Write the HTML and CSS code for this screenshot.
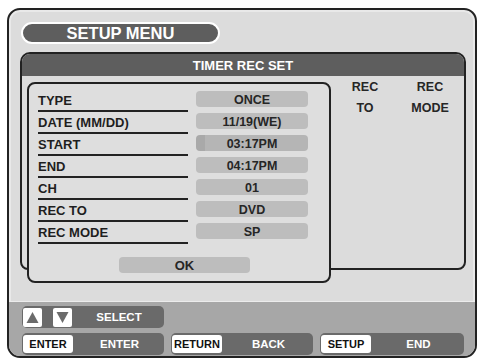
FILE: index.html
```html
<!DOCTYPE html>
<html>
<head>
<meta charset="utf-8">
<link rel="stylesheet" href="styles.css">
</head>
<body>
<div class="frame">
  <div class="title">SETUP MENU</div>
  <div class="panel">
    <div class="panel-head">TIMER REC SET</div>
    <div class="panel-body">
      <div class="dialog">
        <div class="row"><span class="label">TYPE</span><span class="val">ONCE</span></div>
        <div class="row"><span class="label">DATE (MM/DD)</span><span class="val">11/19(WE)</span></div>
        <div class="row"><span class="label">START</span><span class="val val-sel">03:17PM</span></div>
        <div class="row"><span class="label">END</span><span class="val">04:17PM</span></div>
        <div class="row"><span class="label">CH</span><span class="val">01</span></div>
        <div class="row"><span class="label">REC TO</span><span class="val">DVD</span></div>
        <div class="row"><span class="label">REC MODE</span><span class="val">SP</span></div>
        <div class="ok">OK</div>
      </div>
      <div class="cols">
        <div class="col">REC<br>TO</div>
        <div class="col">REC<br>MODE</div>
      </div>
    </div>
  </div>
  <div class="band">
    <div class="brow">
      <div class="grp">
        <span class="arrows">
          <span class="sq"><svg width="19" height="19" viewBox="0 0 19 19"><polygon points="3.5,15 15.5,15 9.5,4" fill="#6b6b6b"/></svg></span>
          <span class="sq"><svg width="19" height="19" viewBox="0 0 19 19"><polygon points="3.5,4 15.5,4 9.5,15" fill="#6b6b6b"/></svg></span>
        </span>
        <span class="txt">SELECT</span>
      </div>
    </div>
    <div class="brow">
      <div class="grp"><span class="key">ENTER</span><span class="txt">ENTER</span></div>
      <div class="grp"><span class="key">RETURN</span><span class="txt">BACK</span></div>
      <div class="grp grp-wide"><span class="key">SETUP</span><span class="txt">END</span></div>
    </div>
  </div>
</div>
</body>
</html>
```

FILE: styles.css
```css
* { box-sizing: border-box; }
html, body { margin: 0; padding: 0; background: #ffffff; }
body {
  font-family: "Liberation Sans", Arial, sans-serif;
  font-weight: bold;
  color: #222;
}
.frame {
  width: 470px;
  height: 350px;
  margin: 8px 0 0 7px;
  border: 2px solid #222;
  border-radius: 13px;
  background: #dcdcdc;
  box-shadow: inset 0 0 0 2px #e9e9e9;
  overflow: hidden;
  display: flex;
  flex-direction: column;
}
.title {
  width: 199px;
  height: 22px;
  margin: 12px 0 0 12px;
  border: 2px solid #fff;
  border-radius: 11px;
  background: #5e5e5e;
  color: #fff;
  font-size: 16.5px;
  line-height: 18px;
  text-align: center;
}
.panel {
  width: 446px;
  height: 218px;
  margin: 8px 0 0 11px;
  border: 2px solid #222;
  border-radius: 10px 10px 8px 8px;
  background: #dcdcdc;
  flex-shrink: 0;
}
.panel-head {
  height: 22px;
  background: #5e5e5e;
  border-radius: 8px 8px 0 0;
  color: #fff;
  font-size: 13px;
  line-height: 23px;
  text-align: center;
}
.panel-body {
  display: flex;
  height: 192px;
}
.dialog {
  flex-shrink: 0;
  width: 304px;
  height: 201px;
  margin: 6px 0 0 5px;
  padding: 6px 0 0 9px;
  border: 2px solid #222;
  border-radius: 8px;
  background: #dedede;
}
.row {
  display: flex;
  gap: 8px;
  height: 22px;
}
.label {
  width: 150px;
  height: 22px;
  border-bottom: 2px solid #222;
  font-size: 13px;
  line-height: 21px;
  white-space: nowrap;
  color: #1e1e1e;
}
.val {
  width: 112px;
  height: 16px;
  margin-top: 1px;
  border-radius: 4px;
  background: #bdbdbd;
  font-size: 12.5px;
  line-height: 19px;
  text-align: center;
  color: #262626;
}
.val-sel {
  background: linear-gradient(to right, #a9a9a9 0, #a9a9a9 9px, #b5b5b5 9px);
}
.ok {
  width: 131px;
  height: 16px;
  margin: 13px 0 0 81px;
  border-radius: 4px;
  background: #bdbdbd;
  font-size: 13px;
  line-height: 17px;
  text-align: center;
  color: #262626;
}
.cols {
  display: flex;
  gap: 5px;
  margin: 1px 0 0 4px;
}
.col {
  width: 60px;
  font-size: 12.5px;
  line-height: 21px;
  text-align: center;
  color: #262626;
}
.band {
  margin-top: auto;
  height: 55px;
  border-top: 1px solid #ececec;
  background: #a7a7a7;
  padding: 4px 0 0 13px;
  display: flex;
  flex-direction: column;
  gap: 5px;
}
.brow {
  display: flex;
  gap: 7px;
}
.grp {
  width: 142px;
  height: 22px;
  padding: 0 2px 0 1px;
  border-radius: 5px;
  background: #6a6a6a;
  display: flex;
  align-items: center;
}
.grp-wide { width: 144px; }
.arrows {
  display: flex;
  gap: 11px;
  width: 49px;
}
.sq {
  width: 19px;
  height: 19px;
  border-radius: 2px;
  background: #fff;
  display: block;
}
.sq svg { display: block; }
.key {
  width: 50px;
  height: 18px;
  border-radius: 3px;
  background: #fff;
  color: #111;
  font-size: 11px;
  line-height: 19px;
  text-align: center;
}
.txt {
  flex: 1;
  color: #fff;
  font-size: 11.5px;
  text-align: center;
  padding-left: 4px;
}
```
